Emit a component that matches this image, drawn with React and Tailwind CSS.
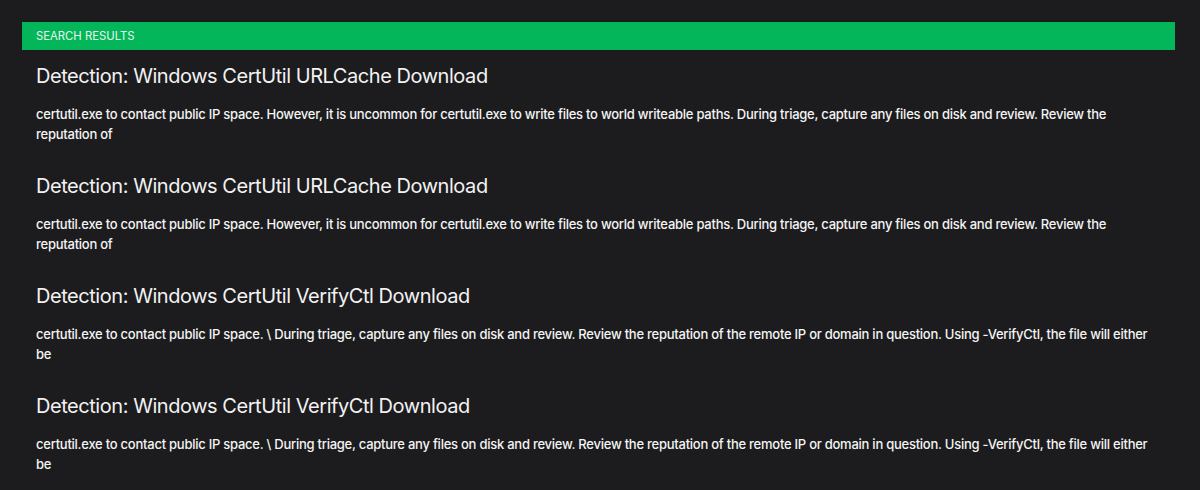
import React from "react";

const items = [
  {
    title: "Detection: Windows CertUtil URLCache Download",
    body: "certutil.exe to contact public IP space. However, it is uncommon for certutil.exe to write files to world writeable paths. During triage, capture any files on disk and review. Review the reputation of",
  },
  {
    title: "Detection: Windows CertUtil URLCache Download",
    body: "certutil.exe to contact public IP space. However, it is uncommon for certutil.exe to write files to world writeable paths. During triage, capture any files on disk and review. Review the reputation of",
  },
  {
    title: "Detection: Windows CertUtil VerifyCtl Download",
    body: "certutil.exe to contact public IP space. \\ During triage, capture any files on disk and review. Review the reputation of the remote IP or domain in question. Using -VerifyCtl, the file will either be",
  },
  {
    title: "Detection: Windows CertUtil VerifyCtl Download",
    body: "certutil.exe to contact public IP space. \\ During triage, capture any files on disk and review. Review the reputation of the remote IP or domain in question. Using -VerifyCtl, the file will either be",
  },
];

export default function App() {
  return (
    <div
      className="w-[1200px] h-[490px] overflow-hidden bg-[#1c1c1e] pt-[22px] pl-[22px]"
      style={{ fontFamily: "Inter, 'Noto Sans', sans-serif" }}
    >
      <div className="w-[1153px]">
        <div className="h-[28px] bg-[#03b65a] flex items-center px-[14px]">
          <span className="text-[11.3px] uppercase text-[#e6f6ec]">
            Search Results
          </span>
        </div>
        <div className="px-[14px] pt-[12px]">
          {items.map((it, i) => (
            <div key={i} className="pb-[28px]">
              <h2 className="text-[20px] leading-[28px] tracking-[-0.45px] text-[#f2f2f2] font-normal">
                {it.title}
              </h2>
              <p className="mt-[14px] text-[13px] leading-[20px] tracking-[-0.25px] font-medium text-[#f4f4f4]">
                {it.body}
              </p>
            </div>
          ))}
        </div>
      </div>
    </div>
  );
}
